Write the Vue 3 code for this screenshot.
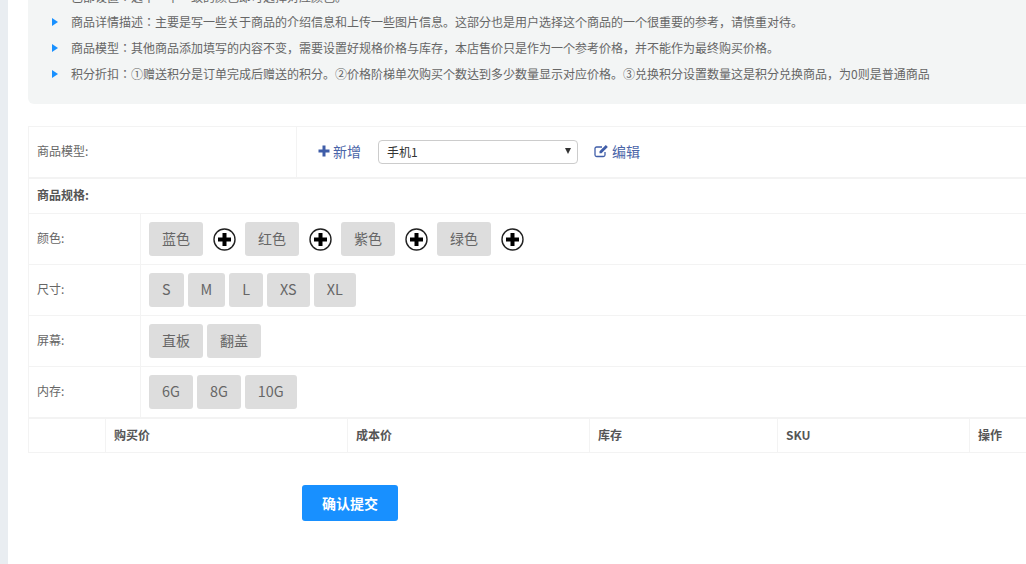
<script setup>
const notes = [
  '商品详情描述：主要是写一些关于商品的介绍信息和上传一些图片信息。这部分也是用户选择这个商品的一个很重要的参考，请慎重对待。',
  '商品模型：其他商品添加填写的内容不变，需要设置好规格价格与库存，本店售价只是作为一个参考价格，并不能作为最终购买价格。',
  '积分折扣：①赠送积分是订单完成后赠送的积分。②价格阶梯单次购买个数达到多少数量显示对应价格。③兑换积分设置数量这是积分兑换商品，为0则是普通商品'
]
const specs = [
  { label: '颜色:', values: ['蓝色', '红色', '紫色', '绿色'], add: true },
  { label: '尺寸:', values: ['S', 'M', 'L', 'XS', 'XL'], latin: true },
  { label: '屏幕:', values: ['直板', '翻盖'] },
  { label: '内存:', values: ['6G', '8G', '10G'], latin: true }
]
const cols = ['', '购买价', '成本价', '库存', 'SKU', '操作']
</script>

<template>
  <div class="page">
    <aside class="rail"></aside>
    <main class="content">
      <section class="tips">
        <p class="clipped">已部设置：选中一个一致的颜色即可选择对应颜色。</p>
        <p v-for="n in notes" :key="n" class="note"><i class="arrow"></i>{{ n }}</p>
      </section>

      <section class="form">
        <div class="model">
          <div class="model-label">商品模型:</div>
          <div class="model-body">
            <a class="link add">
              <svg width="12" height="12" viewBox="0 0 12 12"><path d="M4.500 0.500h3v4h4v3h-4v4h-3v-4h-4v-3h4z" fill="#3f5da8"/></svg>
              新增
            </a>
            <div class="select"><span>手机1</span><i class="caret"></i></div>
            <a class="link">
              <svg width="15" height="14" viewBox="0 0 15 14" fill="none"><path d="M11 8v3a1.600 1.600 0 0 1-1.600 1.500H2.600A1.600 1.600 0 0 1 1 11V4.600A1.600 1.600 0 0 1 2.600 3H8" stroke="#3f5da8" stroke-width="1.300"/><path d="M5.500 7.300 11.800 1l2 2-6.300 6.300H5.500z" fill="#3f5da8"/></svg>
              编辑
            </a>
          </div>
        </div>

        <div class="spec-title">商品规格:</div>

        <div v-for="s in specs" :key="s.label" class="spec">
          <div class="spec-label">{{ s.label }}</div>
          <div class="spec-values">
            <template v-for="v in s.values" :key="v">
              <span class="chip" :class="{ latin: s.latin }">{{ v }}</span>
              <svg v-if="s.add" class="plus" width="23" height="23" viewBox="0 0 23 23">
                <circle cx="11.500" cy="11.500" r="10.500" fill="#fff" stroke="#222" stroke-width="1.400"/>
                <path d="M9.500 5h4v4.500H18v4h-4.500V18h-4v-4.500H5v-4h4.500z" fill="#000"/>
              </svg>
            </template>
          </div>
        </div>

        <div class="table-head">
          <div v-for="(c, i) in cols" :key="i" class="th" :class="'c' + i">{{ c }}</div>
        </div>
      </section>

      <button class="submit">确认提交</button>
    </main>
  </div>
</template>

<style>
html, body { margin: 0; height: 100%; background: #fff; overflow: hidden; }
</style>

<style scoped>
.page {
  display: flex;
  width: 1026px;
  height: 564px;
  overflow: hidden;
  font-family: "Noto Sans CJK SC", "Liberation Sans", sans-serif;
  font-size: 12px;
  color: #555;
}
.rail { flex: 0 0 8px; background: #e9edf1; }
.content { flex: 0 0 1018px; padding-left: 20px; box-sizing: border-box; min-width: 0; }
.tips {
  height: 104px;
  margin-right: -20px;
  background: #f3f5f5;
  border-radius: 0 0 0 6px;
  padding-left: 43px;
  overflow: hidden;
  position: relative;
  font-family: "Noto Sans CJK JP", "Noto Sans CJK SC", sans-serif;
}
.tips p { margin: 0; height: 26px; line-height: 26px; white-space: nowrap; color: #666; position: relative; }
.clipped { margin-top: -16px !important; margin-bottom: -1px !important; height: 26px; }
.arrow {
  position: absolute;
  left: -19px;
  top: 9px;
  border-left: 6px solid #1890ff;
  border-top: 4px solid transparent;
  border-bottom: 4px solid transparent;
}
.form { margin-top: 22px; border: 1px solid #f3f3f3; border-right: 0; width: 998px; box-sizing: border-box; }
.model { display: flex; height: 52px; box-sizing: border-box; border-bottom: 2px solid #f3f3f3; }
.model-label { flex: 0 0 268px; border-right: 1px solid #f3f3f3; padding-left: 8px; line-height: 48px; box-sizing: border-box; color: #666; }
.model-body { display: flex; align-items: center; padding-left: 21px; }
.link { color: #4a64a8; font-size: 14px; display: inline-flex; align-items: center; gap: 3px; padding-bottom: 2px; }
.add { margin-right: 17px; }
.select {
  width: 200px;
  height: 24px;
  box-sizing: border-box;
  border: 1px solid #ccc;
  border-radius: 4px;
  margin-right: 16px;
  padding: 0 6px 2px 8px;
  display: flex;
  align-items: center;
  justify-content: space-between;
  color: #333;
}
.caret { border-top: 6px solid #333; border-left: 3.500px solid transparent; border-right: 3.500px solid transparent; }
.spec-title { height: 35px; line-height: 32px; padding-left: 8px; font-weight: 700; border-bottom: 1px solid #f3f3f3; box-sizing: border-box; }
.spec { display: flex; height: 51px; border-bottom: 1px solid #f3f3f3; box-sizing: border-box; }
.spec:nth-last-child(2) { height: 52px; border-bottom-width: 2px; }
.spec-label { flex: 0 0 112px; border-right: 1px solid #f3f3f3; padding-left: 8px; line-height: 48px; box-sizing: border-box; color: #666; }
.spec-values { display: flex; align-items: center; padding-left: 8px; gap: 4px; }
.chip {
  height: 34px;
  line-height: 32px;
  padding: 0 13px;
  background: #dddddd;
  border-radius: 3px;
  font-size: 14px;
  color: #666;
}
.latin { font-size: 14.400px; }
.plus { margin: 0 5px 0 6px; }
.table-head { display: flex; height: 33px; }
.th { line-height: 32px; padding-left: 8px; font-weight: 700; border-right: 1px solid #f3f3f3; box-sizing: border-box; }
.c0 { flex: 0 0 77px; }
.c1, .c2 { flex: 0 0 242px; }
.c3 { flex: 0 0 188px; }
.c4 { flex: 0 0 192px; }
.c5 { flex: 1; border-right: 0; }
.submit {
  display: block;
  margin: 32px 0 0 274px;
  width: 96px;
  height: 36px;
  border: 0;
  border-radius: 3px;
  background: #1890ff;
  color: #fff;
  font: 700 14px "Noto Sans CJK SC", "Liberation Sans", sans-serif;
}
</style>
